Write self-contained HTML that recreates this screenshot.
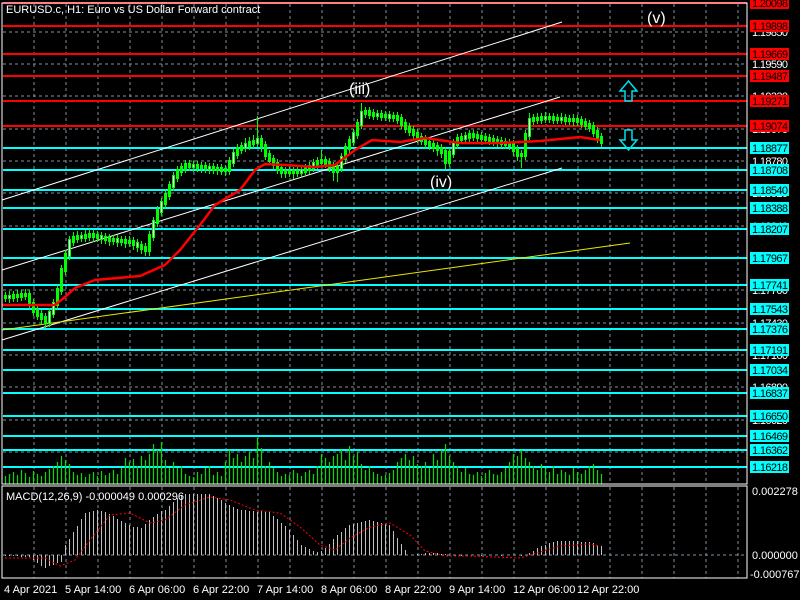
<!DOCTYPE html>
<html><head><meta charset="utf-8"><style>
body{margin:0;background:#000;width:800px;height:600px;overflow:hidden;font-family:"Liberation Sans",sans-serif}
svg{display:block}
</style></head><body>
<svg width="800" height="600" xmlns="http://www.w3.org/2000/svg" font-family="Liberation Sans, sans-serif">
<rect width="800" height="600" fill="#000"/>
<g fill="none" stroke="#8090a0" stroke-dasharray="3,3" stroke-width="1" shape-rendering="crispEdges">
<path d="M34 4V484M66 4V484M98 4V484M130 4V484M162 4V484M194 4V484M226 4V484M258 4V484M290 4V484M322 4V484M354 4V484M386 4V484M418 4V484M450 4V484M482 4V484M514 4V484M546 4V484M578 4V484M610 4V484M642 4V484M674 4V484M706 4V484M738 4V484"/>
<path d="M34 487V578M66 487V578M98 487V578M130 487V578M162 487V578M194 487V578M226 487V578M258 487V578M290 487V578M322 487V578M354 487V578M386 487V578M418 487V578M450 487V578M482 487V578M514 487V578M546 487V578M578 487V578M610 487V578M642 487V578M674 487V578M706 487V578M738 487V578"/>
<path d="M3 32H747M3 64H747M3 96H747M3 129H747M3 161H747M3 193H747M3 226H747M3 258H747M3 290H747M3 323H747M3 355H747M3 387H747M3 420H747M3 452H747M3 555H747"/>
</g>
<g shape-rendering="crispEdges">
<g fill="#f00">
<rect x="3" y="2" width="744" height="2"/><rect x="3" y="25" width="744" height="2"/><rect x="3" y="53" width="744" height="2"/><rect x="3" y="75" width="744" height="2"/><rect x="3" y="100" width="744" height="2"/><rect x="3" y="125" width="744" height="2"/>
</g>
<g fill="#00ffff">
<rect x="3" y="147" width="744" height="2"/><rect x="3" y="169" width="744" height="2"/><rect x="3" y="189" width="744" height="2"/><rect x="3" y="207" width="744" height="2"/><rect x="3" y="228" width="744" height="2"/><rect x="3" y="257" width="744" height="2"/><rect x="3" y="284" width="744" height="2"/><rect x="3" y="308" width="744" height="2"/><rect x="3" y="328" width="744" height="2"/><rect x="3" y="349" width="744" height="2"/><rect x="3" y="369" width="744" height="2"/><rect x="3" y="392" width="744" height="2"/><rect x="3" y="415" width="744" height="2"/><rect x="3" y="435" width="744" height="2"/><rect x="3" y="449" width="744" height="2"/><rect x="3" y="466" width="744" height="2"/>
</g>
</g>
<path fill="none" stroke="#00e000" stroke-width="1.2" d="M5.5 484v-8M9.5 484v-10M13.5 484v-12M17.5 484v-9M21.5 484v-14M25.5 484v-11M29.5 484v-7M33.5 484v-13M37.5 484v-10M41.5 484v-8M45.5 484v-12M49.5 484v-15M53.5 484v-18M57.5 484v-22M61.5 484v-28M65.5 484v-24M69.5 484v-20M73.5 484v-12M77.5 484v-9M81.5 484v-11M85.5 484v-7M89.5 484v-10M93.5 484v-12M97.5 484v-8M101.5 484v-13M105.5 484v-9M109.5 484v-11M113.5 484v-14M117.5 484v-10M121.5 484v-16M125.5 484v-26M129.5 484v-22M133.5 484v-25M137.5 484v-18M141.5 484v-28M145.5 484v-24M149.5 484v-30M153.5 484v-40M157.5 484v-34M161.5 484v-42M165.5 484v-24M169.5 484v-16M173.5 484v-22M177.5 484v-16M181.5 484v-18M185.5 484v-10M189.5 484v-8M193.5 484v-7M197.5 484v-12M201.5 484v-10M205.5 484v-16M209.5 484v-18M213.5 484v-9M217.5 484v-12M221.5 484v-8M225.5 484v-22M229.5 484v-34M233.5 484v-26M237.5 484v-30M241.5 484v-22M245.5 484v-28M249.5 484v-32M253.5 484v-26M257.5 484v-46M261.5 484v-36M265.5 484v-18M269.5 484v-22M273.5 484v-16M277.5 484v-12M281.5 484v-8M285.5 484v-10M289.5 484v-9M293.5 484v-14M297.5 484v-11M301.5 484v-8M305.5 484v-12M309.5 484v-14M313.5 484v-10M317.5 484v-18M321.5 484v-30M325.5 484v-26M329.5 484v-22M333.5 484v-28M337.5 484v-30M341.5 484v-34M345.5 484v-24M349.5 484v-38M353.5 484v-28M357.5 484v-32M361.5 484v-20M365.5 484v-14M369.5 484v-18M373.5 484v-12M377.5 484v-10M381.5 484v-8M385.5 484v-9M389.5 484v-11M393.5 484v-14M397.5 484v-22M401.5 484v-26M405.5 484v-30M409.5 484v-24M413.5 484v-28M417.5 484v-20M421.5 484v-18M425.5 484v-22M429.5 484v-16M433.5 484v-30M437.5 484v-24M441.5 484v-34M445.5 484v-40M449.5 484v-28M453.5 484v-22M457.5 484v-18M461.5 484v-12M465.5 484v-16M469.5 484v-10M473.5 484v-9M477.5 484v-12M481.5 484v-8M485.5 484v-11M489.5 484v-14M493.5 484v-10M497.5 484v-9M501.5 484v-12M505.5 484v-16M509.5 484v-22M513.5 484v-30M517.5 484v-28M521.5 484v-34M525.5 484v-26M529.5 484v-22M533.5 484v-18M537.5 484v-14M541.5 484v-20M545.5 484v-16M549.5 484v-12M553.5 484v-18M557.5 484v-10M561.5 484v-14M565.5 484v-12M569.5 484v-9M573.5 484v-16M577.5 484v-12M581.5 484v-10M585.5 484v-14M589.5 484v-18M593.5 484v-20M597.5 484v-14M601.5 484v-10"/>
<path fill="none" stroke="#c0c0c0" stroke-width="1" shape-rendering="crispEdges" d="M5.5 555V556M9.5 555V556M13.5 555V556M17.5 555V556M21.5 555V557M25.5 555V557M29.5 555V557M33.5 555V560M37.5 555V563M41.5 555V566M45.5 555V568M49.5 555V566M53.5 555V565M57.5 555V563M61.5 555V562M65.5 555V545M69.5 555V539M73.5 555V532M77.5 555V526M81.5 555V519M85.5 555V513M89.5 555V512M93.5 555V511M97.5 555V510M101.5 555V511M105.5 555V512M109.5 555V514M113.5 555V516M117.5 555V519M121.5 555V521M125.5 555V523M129.5 555V525M133.5 555V527M137.5 555V527M141.5 555V528M145.5 555V524M149.5 555V520M153.5 555V517M157.5 555V514M161.5 555V511M165.5 555V510M169.5 555V506M173.5 555V502M177.5 555V498M181.5 555V495M185.5 555V494M189.5 555V494M193.5 555V494M197.5 555V494M201.5 555V494M205.5 555V494M209.5 555V494M213.5 555V496M217.5 555V498M221.5 555V500M225.5 555V503M229.5 555V505M233.5 555V507M237.5 555V509M241.5 555V510M245.5 555V510M249.5 555V511M253.5 555V511M257.5 555V512M261.5 555V511M265.5 555V512M269.5 555V512M273.5 555V516M277.5 555V519M281.5 555V523M285.5 555V526M289.5 555V530M293.5 555V535M297.5 555V540M301.5 555V545M305.5 555V547M309.5 555V549M313.5 555V551M317.5 555V552M321.5 555V551M325.5 555V548M329.5 555V544M333.5 555V539M337.5 555V535M341.5 555V532M345.5 555V528M349.5 555V525M353.5 555V524M357.5 555V523M361.5 555V522M365.5 555V521M369.5 555V520M373.5 555V521M377.5 555V522M381.5 555V523M385.5 555V524M389.5 555V525M393.5 555V531M397.5 555V538M401.5 555V544M405.5 555V550M409.5 555V555M417.5 555V554M421.5 555V554M425.5 555V553M429.5 555V553M433.5 555V553M437.5 555V553M441.5 555V554M445.5 555V554M461.5 555V556M481.5 555V556M501.5 555V556M521.5 555V556M529.5 555V553M533.5 555V551M537.5 555V548M541.5 555V546M545.5 555V545M549.5 555V543M553.5 555V542M557.5 555V541M561.5 555V541M565.5 555V541M569.5 555V541M573.5 555V541M577.5 555V541M581.5 555V542M585.5 555V542M589.5 555V542M593.5 555V543M597.5 555V545M601.5 555V546"/>
<polyline fill="none" stroke="#f00" stroke-width="1" stroke-dasharray="2,2" points="5,558 45,558 60,566 75,560 90,540 110,515 130,513 150,523 165,520 185,505 210,497 230,500 255,510 280,513 300,527 320,545 335,550 350,538 370,527 390,523 410,535 425,551 445,556 470,556 520,558 540,552 560,546 590,544 600,546"/>
<g fill="none">
<line x1="2" y1="200" x2="562" y2="22" stroke="#fff" stroke-width="1"/>
<line x1="2" y1="270" x2="560" y2="97" stroke="#fff" stroke-width="1"/>
<line x1="2" y1="340" x2="562" y2="168" stroke="#fff" stroke-width="1"/>
<line x1="2" y1="330" x2="630" y2="243" stroke="#e8e800" stroke-width="1"/>
</g>
<path fill="none" stroke="#00ff00" stroke-width="1" shape-rendering="crispEdges" d="M5.5 292V302M9.5 291V303M13.5 291V302M17.5 290V302M21.5 290V301M25.5 289V300M29.5 290V309M33.5 299V316M37.5 306V320M41.5 310V324M45.5 313V328M49.5 308V327M53.5 299V318M57.5 285V309M61.5 265V295M65.5 250V275M69.5 236V260M73.5 232V246M77.5 231V243M81.5 232V242M85.5 230V242M89.5 229V241M93.5 230V242M97.5 231V242M101.5 232V244M105.5 233V244M109.5 234V246M113.5 235V245M117.5 235V247M121.5 236V246M125.5 236V248M129.5 236V247M133.5 237V250M137.5 239V252M141.5 241V254M145.5 243V256M149.5 231V256M153.5 217V241M157.5 206V227M161.5 198V216M165.5 190V208M169.5 181V200M173.5 172V191M177.5 166V182M181.5 163V176M185.5 160V173M189.5 160V171M193.5 161V172M197.5 161V172M201.5 162V173M205.5 162V173M209.5 163V174M213.5 163V174M217.5 164V175M221.5 164V175M225.5 165V176M229.5 157V175M233.5 149V167M237.5 144V159M241.5 142V154M245.5 138V152M249.5 137V150M253.5 135V148M257.5 116V147M261.5 135V152M265.5 141V160M269.5 150V165M273.5 155V169M277.5 159V174M281.5 164V178M285.5 167V178M289.5 166V177M293.5 167V179M297.5 166V177M301.5 166V177M305.5 164V176M309.5 162V174M313.5 159V172M317.5 157V169M321.5 150V167M325.5 156V168M329.5 158V172M333.5 162V181M337.5 162V182M341.5 153V172M345.5 143V163M349.5 136V153M353.5 129V146M357.5 119V139M361.5 103V129M365.5 107V118M369.5 107V119M373.5 109V120M377.5 110V120M381.5 110V121M385.5 111V121M389.5 111V122M393.5 112V122M397.5 112V124M401.5 114V129M405.5 119V133M409.5 123V136M413.5 126V139M417.5 129V143M421.5 133V145M425.5 135V148M429.5 138V150M433.5 140V152M437.5 142V156M441.5 144V158M445.5 147V169M449.5 148V167M453.5 139V158M457.5 134V149M461.5 133V144M465.5 132V143M469.5 130V142M473.5 130V141M477.5 131V142M481.5 132V143M485.5 133V144M489.5 134V145M493.5 135V146M497.5 136V147M501.5 137V148M505.5 138V149M509.5 139V150M513.5 140V156M517.5 145V161M521.5 150V168M525.5 130V160M529.5 113V140M533.5 114V125M537.5 113V124M541.5 113V124M545.5 112V123M549.5 113V123M553.5 113V124M557.5 114V124M561.5 113V124M565.5 114V125M569.5 115V125M573.5 114V126M577.5 115V126M581.5 116V128M585.5 118V130M589.5 120V132M593.5 122V137M597.5 127V143M601.5 133V147"/>
<path fill="none" stroke="#00ff00" stroke-width="3" shape-rendering="crispEdges" d="M5.5 295V299M9.5 295V299M13.5 294V299M17.5 294V298M21.5 293V298M25.5 293V297M29.5 293V306M33.5 302V313M37.5 309V317M41.5 313V320M45.5 316V324M49.5 311V324M53.5 302V315M57.5 288V306M61.5 268V292M65.5 253V272M69.5 239V257M73.5 236V243M77.5 235V240M81.5 235V239M85.5 234V239M89.5 233V238M93.5 233V238M97.5 234V239M101.5 235V240M105.5 236V241M109.5 237V242M113.5 238V242M117.5 238V243M121.5 239V243M125.5 239V244M129.5 240V244M133.5 240V246M137.5 242V248M141.5 244V250M145.5 246V252M149.5 234V252M153.5 220V238M157.5 209V224M161.5 201V213M165.5 193V205M169.5 184V197M173.5 175V188M177.5 169V179M181.5 166V173M185.5 163V170M189.5 163V168M193.5 164V168M197.5 164V169M201.5 165V169M205.5 165V170M209.5 166V170M213.5 166V171M217.5 167V171M221.5 167V172M225.5 168V172M229.5 160V172M233.5 152V164M237.5 147V156M241.5 145V151M245.5 143V149M249.5 141V147M253.5 140V145M257.5 138V144M261.5 138V148M265.5 144V157M269.5 153V162M273.5 158V166M277.5 162V171M281.5 167V174M285.5 170V174M289.5 170V174M293.5 170V174M297.5 170V174M301.5 169V174M305.5 167V173M309.5 165V171M313.5 162V169M317.5 160V166M321.5 159V164M325.5 159V165M329.5 161V169M333.5 165V173M337.5 165V173M341.5 156V169M345.5 146V160M349.5 139V150M353.5 132V143M357.5 122V136M361.5 111V126M365.5 110V115M369.5 110V116M373.5 112V117M377.5 113V117M381.5 113V118M385.5 114V118M389.5 114V119M393.5 115V119M397.5 115V121M401.5 117V126M405.5 122V130M409.5 126V133M413.5 129V136M417.5 132V140M421.5 136V142M425.5 138V145M429.5 141V147M433.5 143V149M437.5 145V151M441.5 147V154M445.5 150V164M449.5 151V164M453.5 142V155M457.5 137V146M461.5 136V141M465.5 135V140M469.5 133V139M473.5 133V138M477.5 134V139M481.5 135V140M485.5 136V141M489.5 137V142M493.5 138V143M497.5 139V144M501.5 140V145M505.5 141V146M509.5 142V147M513.5 143V152M517.5 148V157M521.5 153V157M525.5 133V157M529.5 118V137M533.5 117V122M537.5 117V121M541.5 116V121M545.5 116V120M549.5 116V120M553.5 116V121M557.5 117V121M561.5 117V121M565.5 117V122M569.5 118V122M573.5 118V122M577.5 118V123M581.5 119V125M585.5 121V127M589.5 123V129M593.5 125V134M597.5 130V140M601.5 136V144"/>
<path fill="none" stroke="#fff" stroke-width="1" shape-rendering="crispEdges" d="M9.5 296V298M49.5 312V323M53.5 303V314M69.5 240V256M81.5 236V238M101.5 236V239M117.5 239V242M137.5 243V247M153.5 221V237M161.5 202V212M173.5 176V187M193.5 165V167M209.5 167V169M233.5 153V163M245.5 144V148M257.5 139V143M301.5 170V173M313.5 163V168M341.5 157V168M353.5 133V142M361.5 112V125M377.5 114V116M389.5 115V118M453.5 143V154M465.5 136V139M529.5 119V136M545.5 117V119M561.5 118V120"/>
<polyline fill="none" stroke="#f00" stroke-width="2.5" points="2,305 55,305 65,297 75,288 95,280 140,276 165,265 180,250 200,225 215,205 240,190 255,170 265,164 285,165 315,167 335,165 355,150 372,140 400,142 425,138 460,143 500,143 540,141 580,137 600,140"/>
<g fill="none" stroke="#00e0f0" stroke-width="1.5">
<path d="M625 101 V91 H620 L628.5 81 L637 91 H632 V101 Z"/>
<path d="M625 130 V140 H620 L628.5 150 L637 140 H632 V130 Z"/>
</g>
<g fill="#fff" font-size="16">
<text x="647" y="23">(v)</text>
<text x="349" y="94">(iii)</text>
<text x="430" y="187">(iv)</text>
</g>
<text x="6" y="13" fill="#fff" font-size="11">EURUSD.c, H1:  Euro vs US Dollar Forward contract</text>
<text x="6" y="500" fill="#fff" font-size="11">MACD(12,26,9) -0.000049 0.000296</text>
<g stroke="#fff" fill="none" stroke-width="1" shape-rendering="crispEdges">
<rect x="2" y="3" width="745" height="481"/>
<rect x="2" y="486" width="745" height="92"/>
</g>
<g font-size="11" fill="#fff">
<text x="752" y="36" textLength="36">1.19850</text><text x="752" y="68" textLength="36">1.19590</text><text x="752" y="100" textLength="36">1.19330</text><text x="752" y="133" textLength="36">1.19070</text><text x="752" y="165" textLength="36">1.18780</text><text x="752" y="197" textLength="36">1.18520</text><text x="752" y="230" textLength="36">1.18240</text><text x="752" y="262" textLength="36">1.17970</text><text x="752" y="294" textLength="36">1.17700</text><text x="752" y="327" textLength="36">1.17430</text><text x="752" y="359" textLength="36">1.17160</text><text x="752" y="391" textLength="36">1.16890</text><text x="752" y="424" textLength="36">1.16620</text><text x="752" y="456" textLength="36">1.16350</text>
<text x="752" y="495">0.002278</text><text x="752" y="559">0.000000</text><text x="750" y="578">-0.000767</text>
</g>
<g fill="#f00">
<rect x="750" y="-3" width="39" height="12"/><rect x="750" y="20" width="39" height="12"/><rect x="750" y="48" width="39" height="12"/><rect x="750" y="70" width="39" height="12"/><rect x="750" y="95" width="39" height="12"/><rect x="750" y="120" width="39" height="12"/>
</g>
<g fill="#00ffff">
<rect x="750" y="142" width="39" height="12"/><rect x="750" y="164" width="39" height="12"/><rect x="750" y="184" width="39" height="12"/><rect x="750" y="202" width="39" height="12"/><rect x="750" y="223" width="39" height="12"/><rect x="750" y="252" width="39" height="12"/><rect x="750" y="279" width="39" height="12"/><rect x="750" y="303" width="39" height="12"/><rect x="750" y="323" width="39" height="12"/><rect x="750" y="344" width="39" height="12"/><rect x="750" y="364" width="39" height="12"/><rect x="750" y="387" width="39" height="12"/><rect x="750" y="410" width="39" height="12"/><rect x="750" y="430" width="39" height="12"/><rect x="750" y="444" width="39" height="12"/><rect x="750" y="461" width="39" height="12"/>
</g>
<g font-size="11" fill="#000">
<text x="752" y="7" textLength="36">1.20098</text><text x="752" y="30" textLength="36">1.19898</text><text x="752" y="58" textLength="36">1.19669</text><text x="752" y="80" textLength="36">1.19487</text><text x="752" y="105" textLength="36">1.19271</text><text x="752" y="130" textLength="36">1.19074</text>
<text x="752" y="152" textLength="36">1.18877</text><text x="752" y="174" textLength="36">1.18708</text><text x="752" y="194" textLength="36">1.18540</text><text x="752" y="212" textLength="36">1.18388</text><text x="752" y="233" textLength="36">1.18207</text><text x="752" y="262" textLength="36">1.17967</text><text x="752" y="289" textLength="36">1.17741</text><text x="752" y="313" textLength="36">1.17543</text><text x="752" y="333" textLength="36">1.17376</text><text x="752" y="354" textLength="36">1.17191</text><text x="752" y="374" textLength="36">1.17034</text><text x="752" y="397" textLength="36">1.16837</text><text x="752" y="420" textLength="36">1.16650</text><text x="752" y="440" textLength="36">1.16469</text><text x="752" y="454" textLength="36">1.16362</text><text x="752" y="471" textLength="36">1.16218</text>
</g>
<g fill="#fff" font-size="11">
<text x="4" y="593">4 Apr 2021</text><text x="65" y="593">5 Apr 14:00</text><text x="129" y="593">6 Apr 06:00</text><text x="193" y="593">6 Apr 22:00</text><text x="257" y="593">7 Apr 14:00</text><text x="321" y="593">8 Apr 06:00</text><text x="385" y="593">8 Apr 22:00</text><text x="449" y="593">9 Apr 14:00</text><text x="513" y="593">12 Apr 06:00</text><text x="577" y="593">12 Apr 22:00</text>
</g>
</svg>
</body></html>
